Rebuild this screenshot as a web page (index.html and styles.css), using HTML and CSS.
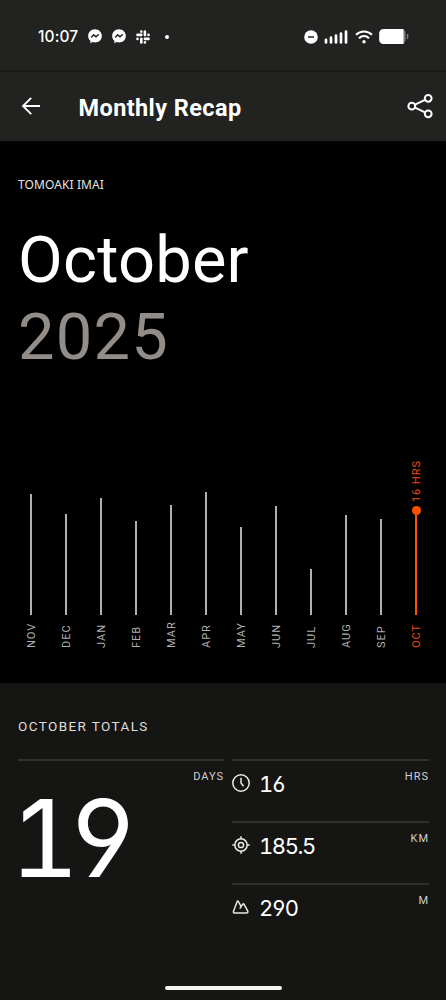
FILE: index.html
```html
<!DOCTYPE html>
<html lang="en">
<head>
    <meta charset="UTF-8">
    <meta name="viewport" content="width=device-width, initial-scale=1.0">
    <title>Monthly Recap</title>
    <link rel="stylesheet" href="styles.css">
</head>
<body>
    <div class="screen">
        <div class="status-bar">
            <span class="clock">10:07</span>
            <div class="notifications">
                <svg width="14" height="15" viewBox="0 0 14 15">
                    <path d="M7 .3C3.2.3.2 3.1.2 6.9c0 2 .8 3.7 2.2 4.9v2.5l2.2-1.2c.8.2 1.5.3 2.4.3 3.8 0 6.8-2.8 6.8-6.5S10.8.3 7 .3z" fill="#fff"/>
                    <path d="M3.2 8.6l2.5-2.8 2.4 2 2.7-2.5" fill="none" stroke="#222220" stroke-width="1.5"/>
                </svg>
                <svg width="14" height="15" viewBox="0 0 14 15">
                    <path d="M7 .3C3.2.3.2 3.1.2 6.9c0 2 .8 3.7 2.2 4.9v2.5l2.2-1.2c.8.2 1.5.3 2.4.3 3.8 0 6.8-2.8 6.8-6.5S10.8.3 7 .3z" fill="#fff"/>
                    <path d="M3.2 8.6l2.5-2.8 2.4 2 2.7-2.5" fill="none" stroke="#222220" stroke-width="1.5"/>
                </svg>
                <svg width="14" height="14" viewBox="0 0 14 14" stroke="#fff" stroke-width="2.6" stroke-linecap="round">
                    <path d="M5.3 1.5v.1M5.3 4.9H1.5M8.9 1.5v3.6M12.5 4.9v.1M8.9 8.900h3.600M8.9 12.5v-.1M5.3 12.5V8.9M1.5 8.9v.1"/>
                </svg>
                <span class="dot"></span>
            </div>
            <div class="system">
                <svg width="14" height="14" viewBox="0 0 14 14">
                    <circle cx="7" cy="7" r="6.8" fill="#fff"/>
                    <path d="M4 7h6" stroke="#222220" stroke-width="1.5"/>
                </svg>
                <svg width="24" height="14" viewBox="0 0 24 14" stroke="#fff" stroke-width="2.7" stroke-linecap="round">
                    <path d="M2 9.8v2.7M7 7.7v4.8M12 5.7v6.8M17 3.6v8.9M22 1.5v11"/>
                </svg>
                <svg width="18" height="14" viewBox="0 0 18 14" fill="none" stroke="#fff" stroke-width="2.2">
                    <path d="M1 4.7C5.5.4 12.5.4 17 4.7M4 8.2c2.9-2.7 7.1-2.7 10 0"/>
                    <circle cx="9" cy="11.8" r="1.7" fill="#fff" stroke="none"/>
                </svg>
                <svg width="30" height="15" viewBox="0 0 30 15">
                    <rect x=".4" y=".4" width="26.2" height="14.2" rx="4" fill="#777775"/>
                    <path d="M4.5 0H24.5v15h-20A4.3 4.3 0 0 1 .2 10.7V4.3A4.3 4.3 0 0 1 4.5 0z" fill="#fff"/>
                    <path d="M28.3 5c1 1 1 4 0 5z" fill="#8b8b88" stroke="#8b8b88" stroke-width=".6"/>
                </svg>
            </div>
        </div>

        <div class="app-bar">
            <svg class="back" width="20" height="20" viewBox="0 0 20 20" fill="none" stroke="#fff" stroke-width="1.8">
                <path d="M10.2 1.8L2 10l8.2 8.2M2.2 10H19"/>
            </svg>
            <h1>Monthly Recap</h1>
            <svg class="share" width="26" height="26" viewBox="0 0 26 26" fill="none" stroke="#fff" stroke-width="2">
                <circle cx="4.8" cy="13.2" r="3.4"/>
                <circle cx="21.2" cy="5.3" r="3.4"/>
                <circle cx="21.2" cy="20.8" r="3.4"/>
                <path d="M8 11.7l10-4.9M8 14.7l10 4.7"/>
            </svg>
        </div>

        <div class="hero">
            <p class="athlete">TOMOAKI IMAI</p>
            <h2 class="month">October</h2>
            <p class="year">2025</p>
            <div class="chart">
                <div class="bar"><i style="height: 121px"></i><span>NOV</span></div>
                <div class="bar"><i style="height: 101px"></i><span>DEC</span></div>
                <div class="bar"><i style="height: 117px"></i><span>JAN</span></div>
                <div class="bar"><i style="height: 94px"></i><span>FEB</span></div>
                <div class="bar"><i style="height: 110px"></i><span>MAR</span></div>
                <div class="bar"><i style="height: 123px"></i><span>APR</span></div>
                <div class="bar"><i style="height: 88px"></i><span>MAY</span></div>
                <div class="bar"><i style="height: 109px"></i><span>JUN</span></div>
                <div class="bar"><i style="height: 46px"></i><span>JUL</span></div>
                <div class="bar"><i style="height: 100px"></i><span>AUG</span></div>
                <div class="bar"><i style="height: 96px"></i><span>SEP</span></div>
                <div class="bar current"><b>16 HRS</b><em></em><i style="height: 100px"></i><span>OCT</span></div>
            </div>
        </div>

        <div class="totals">
            <h3>OCTOBER TOTALS</h3>
            <div class="totals-grid">
                <div class="days">
                    <span class="unit">DAYS</span>
                    <span class="days-value">19</span>
                </div>
                <div class="stats">
                    <div class="stat">
                        <svg width="18" height="18" viewBox="0 0 18 18" fill="none" stroke="#e8e8e6" stroke-width="1.5">
                            <circle cx="9" cy="9" r="8.2"/>
                            <path d="M9 3.7V9l2.6 3.2"/>
                        </svg>
                        <span class="value">16</span>
                        <span class="unit">HRS</span>
                    </div>
                    <div class="stat">
                        <svg width="18" height="18" viewBox="0 0 18 18" fill="none" stroke="#e8e8e6" stroke-width="1.5">
                            <circle cx="9" cy="9" r="6.2"/>
                            <circle cx="9" cy="9" r="2.6"/>
                            <path d="M9 .3v2.9M9 14.8v2.9M.3 9h2.9M14.8 9h2.9"/>
                        </svg>
                        <span class="value">185.5</span>
                        <span class="unit">KM</span>
                    </div>
                    <div class="stat">
                        <svg width="18" height="18" viewBox="0 0 18 18" fill="none" stroke="#e8e8e6" stroke-width="1.5" stroke-linejoin="round">
                            <path d="M1.5 13.3L5.2 3.5q.6-1 1.2 0l2.7 5.2 1.8-2.7q.6-.6 1 .1l3.9 7.1q.4 1.7-1 1.7H2.5q-1.5 0-1-1.6z"/>
                            <path d="M9.1 8.7l-1.3 1.9"/>
                        </svg>
                        <span class="value">290</span>
                        <span class="unit">M</span>
                    </div>
                </div>
            </div>
            <div class="home-indicator"></div>
        </div>
    </div>
</body>
</html>
```
FILE: styles.css
```css
* {
    margin: 0;
    padding: 0;
    box-sizing: border-box;
}

body {
    font-family: Roboto, "Noto Sans", sans-serif;
    background: #000;
    color: #fff;
}

svg {
    display: block;
    flex-shrink: 0;
}

.screen {
    width: 446px;
    height: 1000px;
    display: flex;
    flex-direction: column;
    overflow: hidden;
}

.status-bar {
    height: 72px;
    padding: 3px 37px 0 38px;
    display: flex;
    align-items: center;
    background: #222220;
    border-bottom: 2px solid #191918;
}

.clock {
    width: 50px;
    font-family: Inter, sans-serif;
    font-size: 15.5px;
    font-weight: 500;
    letter-spacing: 0.1px;
}

.notifications {
    display: flex;
    align-items: center;
    gap: 10px;
}

.dot {
    width: 4px;
    height: 4px;
    margin-left: 5px;
    border-radius: 50%;
    background: #fff;
}

.system {
    margin-left: auto;
    display: flex;
    align-items: center;
    gap: 6.5px;
}

.app-bar {
    height: 69px;
    padding: 0 13px 0 21px;
    display: flex;
    align-items: center;
    background: #222220;
}

.app-bar h1 {
    margin: 3px 0 0 37.5px;
    font-size: 23.5px;
    font-weight: 700;
    letter-spacing: 0.4px;
}

.back,
.share {
    margin-bottom: 1px;
}

.share {
    margin-left: auto;
}

.hero {
    height: 542px;
    padding-top: 36px;
    display: flex;
    flex-direction: column;
}

.athlete {
    padding-left: 18px;
    font-family: "Noto Sans", sans-serif;
    font-size: 12px;
    line-height: 16px;
    letter-spacing: 0.1px;
    color: #e4e4e2;
}

.month,
.year {
    padding-left: 18px;
    font-size: 65px;
    line-height: 77px;
    font-weight: 400;
}

.month {
    margin-top: 29px;
    letter-spacing: 0.2px;
}

.year {
    letter-spacing: 1.2px;
    color: #928d88;
}

.chart {
    margin: auto 0 35px 13.5px;
    display: grid;
    grid-template-columns: repeat(12, 35px);
    align-items: end;
}

.bar {
    display: flex;
    flex-direction: column;
    align-items: center;
    color: #b0b0ae;
    font-size: 11px;
    line-height: 12px;
    letter-spacing: 1px;
}

.bar i {
    width: 2px;
    background: #b0b0ae;
}

.bar span,
.bar b {
    margin-left: 2px;
    writing-mode: vertical-rl;
    transform: rotate(180deg);
    font-weight: 400;
}

.bar span {
    height: 33px;
}

.bar.current {
    color: #e04c12;
}

.bar.current i {
    background: #fc5200;
}

.bar.current em {
    width: 9px;
    height: 9px;
    border-radius: 50%;
    background: #fc5200;
}

.bar.current b {
    margin-bottom: 4px;
}

.totals {
    flex: 1;
    padding: 35px 17px 10px 18px;
    display: flex;
    flex-direction: column;
    background: #151513;
}

.totals h3 {
    font-size: 13.5px;
    line-height: 16px;
    font-weight: 400;
    letter-spacing: 1.4px;
    color: #dededc;
}

.totals-grid {
    margin-top: 25px;
    display: grid;
    grid-template-columns: 206px 197px;
    gap: 8px;
}

.days,
.stat {
    display: flex;
    border-top: 2px solid #30302e;
}

.days {
    flex-direction: column;
}

.unit {
    margin-top: 9px;
    font-size: 11px;
    line-height: 14px;
    letter-spacing: 1px;
    color: #d0d0ce;
}

.days .unit {
    align-self: flex-end;
}

.days-value,
.value {
    font-family: Inter, sans-serif;
    font-feature-settings: "tnum", "cv03", "cv04", "ss01";
}

.days-value {
    margin: 1px 0 0 -8px;
    font-size: 107px;
    line-height: 106px;
    font-weight: 400;
    letter-spacing: -11px;
}

.stat {
    height: 62px;
}

.stat svg {
    margin-top: 13px;
}

.value {
    margin: 9px 0 0 9px;
    font-size: 22px;
    line-height: 28px;
    letter-spacing: -1.4px;
}

.stat .unit {
    margin-left: auto;
}

.home-indicator {
    width: 117px;
    height: 4px;
    margin: auto auto 0 147px;
    border-radius: 2px;
    background: #f4f4f2;
}
```
